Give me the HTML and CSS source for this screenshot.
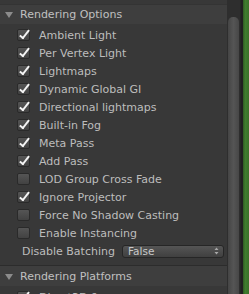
FILE: index.html
```html
<!DOCTYPE html>
<html>
<head>
<meta charset="utf-8">
<link rel="stylesheet" href="styles.css">
</head>
<body>
<div class="window">
  <div class="panel">
    <div class="header first">
      <span class="tri"></span><span class="htext">Rendering Options</span>
    </div>
    <div class="rows">
      <div class="row"><span class="cb on"></span><span>Ambient Light</span></div>
      <div class="row"><span class="cb on"></span><span>Per Vertex Light</span></div>
      <div class="row"><span class="cb on"></span><span>Lightmaps</span></div>
      <div class="row"><span class="cb on"></span><span>Dynamic Global GI</span></div>
      <div class="row"><span class="cb on"></span><span>Directional lightmaps</span></div>
      <div class="row"><span class="cb on"></span><span>Built-in Fog</span></div>
      <div class="row"><span class="cb on"></span><span>Meta Pass</span></div>
      <div class="row"><span class="cb on"></span><span>Add Pass</span></div>
      <div class="row"><span class="cb"></span><span>LOD Group Cross Fade</span></div>
      <div class="row"><span class="cb on"></span><span>Ignore Projector</span></div>
      <div class="row"><span class="cb"></span><span>Force No Shadow Casting</span></div>
      <div class="row"><span class="cb"></span><span>Enable Instancing</span></div>
      <div class="row field"><span class="label">Disable Batching</span>
        <span class="select"><span>False</span>
          <svg class="arrows" width="5" height="8" viewBox="0 0 5 8"><path d="M2.5 0.5 L4.5 3 L0.5 3 Z M0.5 5 L4.5 5 L2.5 7.5 Z" fill="#a8a8a8"/></svg>
        </span>
      </div>
    </div>
    <div class="header second">
      <span class="tri"></span><span class="htext">Rendering Platforms</span>
    </div>
    <div class="rows">
      <div class="row"><span class="cb on"></span><span>Direct3D 9</span></div>
    </div>
  </div>
  <div class="scrollbar"><div class="thumb"></div></div>
  <div class="edge"></div>
  <div class="green"></div>
</div>
</body>
</html>
```
FILE: styles.css
```css
html, body {
  margin: 0;
  padding: 0;
  background: #383838;
}
.window {
  display: flex;
  width: 249px;
  height: 294px;
  overflow: hidden;
  font-family: "DejaVu Sans", sans-serif;
  font-size: 11px;
  color: #bdbdbd;
}
.panel {
  width: 227px;
  background: #383838;
  display: flex;
  flex-direction: column;
}
.header {
  display: flex;
  align-items: center;
  background: #3e3e3e;
  height: 20px;
  flex: none;
}
.header.first {
  margin-top: 4px;
  border-top: 1px solid #343434;
  height: 19px;
}
.header.second {
  margin-top: 5px;
  border-top: 1px solid #2c2c2c;
  height: 20px;
}
.tri {
  width: 0;
  height: 0;
  border-left: 4px solid transparent;
  border-right: 4px solid transparent;
  border-top: 6px solid #8c8c8c;
  margin-left: 5px;
  margin-right: 7px;
  margin-top: 1px;
}
.htext {
  color: #c0c0c0;
}
.rows {
  display: flex;
  flex-direction: column;
  margin-top: 2px;
}
.row {
  height: 18px;
  display: flex;
  align-items: center;
  padding-left: 17px;
  white-space: nowrap;
}
.cb {
  width: 11px;
  height: 10px;
  border: 1px solid #2a2a2a;
  border-radius: 2px;
  background: linear-gradient(#555555, #424242);
  margin-right: 9px;
  position: relative;
  flex: none;
}
.cb.on::after {
  content: "";
  position: absolute;
  left: 4px;
  top: -2px;
  width: 3px;
  height: 9px;
  border-right: 2px solid #f4f4f4;
  border-bottom: 2px solid #f4f4f4;
  transform: rotate(38deg);
}
.field {
  padding-left: 22px;
}
.label {
  width: 100px;
}
.select {
  display: flex;
  align-items: center;
  justify-content: space-between;
  width: 91px;
  height: 11px;
  padding: 0 4px 0 5px;
  border: 1px solid #262626;
  border-radius: 3px;
  background: linear-gradient(#555555, #404040);
  color: #c8c8c8;
  font-size: 10.5px;
  line-height: 11px;
}
.arrows {
  display: block;
}
.scrollbar {
  width: 13px;
  background: #2e2e2e;
  border-right: 1px solid #262626;
  display: flex;
  flex-direction: column;
  align-items: center;
}
.thumb {
  margin-top: 17px;
  width: 11px;
  flex: 1;
  border-radius: 5px 5px 0 0;
  background: linear-gradient(90deg, #454545, #555555 50%, #474747);
}
.edge {
  width: 2px;
  background: #202020;
}
.green {
  flex: 1;
  background: linear-gradient(90deg, #2f5a22, #3f7d2e 40%, #3a7029);
}
```
